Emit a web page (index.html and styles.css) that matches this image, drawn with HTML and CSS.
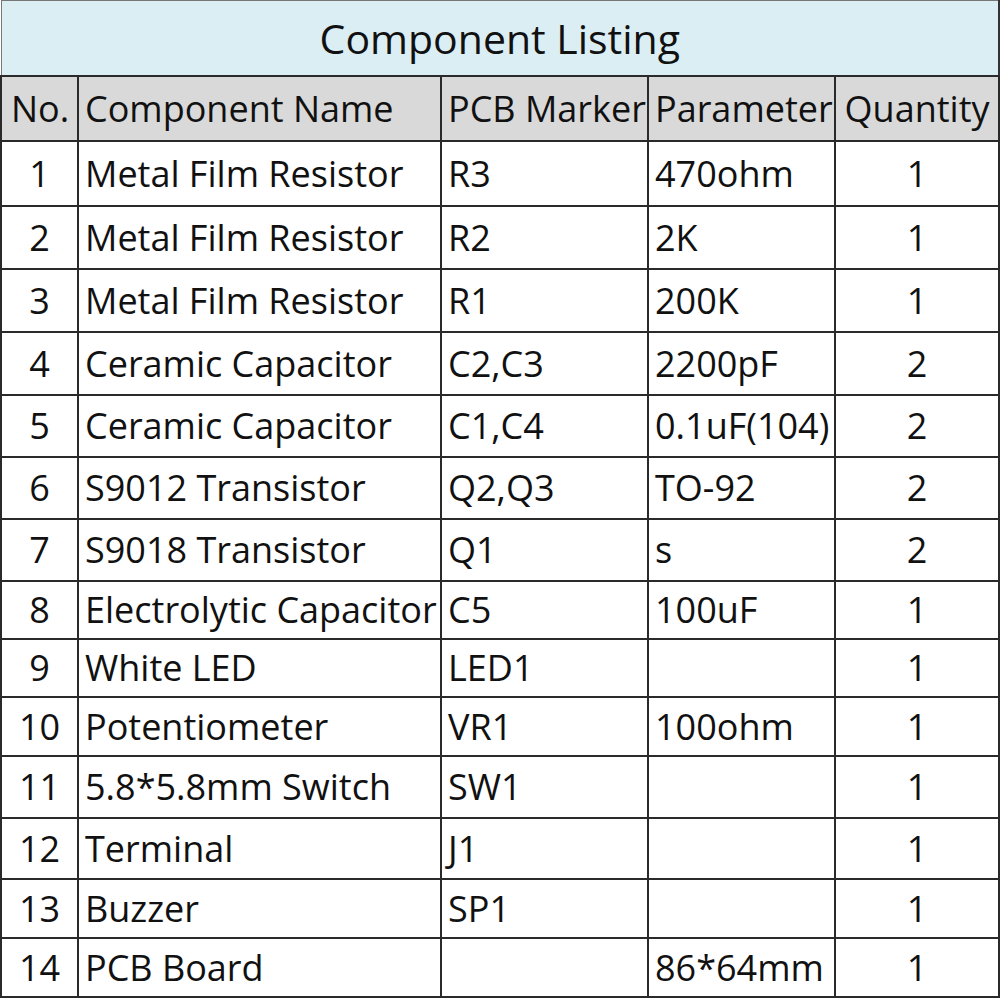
FILE: index.html
```html
<!DOCTYPE html>
<html>
<head>
<meta charset="utf-8">
<link rel="stylesheet" href="styles.css">
</head>
<body>
<table class="listing">
  <colgroup>
    <col class="c-no"><col class="c-name"><col class="c-mark"><col class="c-param"><col class="c-qty">
  </colgroup>
  <thead>
    <tr class="title-row"><th colspan="5">Component Listing</th></tr>
    <tr class="head-row">
      <th class="no">No.</th><th>Component Name</th><th>PCB Marker</th><th>Parameter</th><th class="qty">Quantity</th>
    </tr>
  </thead>
  <tbody>
    <tr><td class="no">1</td><td>Metal Film Resistor</td><td>R3</td><td>470ohm</td><td class="qty">1</td></tr>
    <tr><td class="no">2</td><td>Metal Film Resistor</td><td>R2</td><td>2K</td><td class="qty">1</td></tr>
    <tr><td class="no">3</td><td>Metal Film Resistor</td><td>R1</td><td>200K</td><td class="qty">1</td></tr>
    <tr><td class="no">4</td><td>Ceramic Capacitor</td><td>C2,C3</td><td>2200pF</td><td class="qty">2</td></tr>
    <tr><td class="no">5</td><td>Ceramic Capacitor</td><td>C1,C4</td><td>0.1uF(104)</td><td class="qty">2</td></tr>
    <tr><td class="no">6</td><td>S9012 Transistor</td><td>Q2,Q3</td><td>TO-92</td><td class="qty">2</td></tr>
    <tr><td class="no">7</td><td>S9018 Transistor</td><td>Q1</td><td>s</td><td class="qty">2</td></tr>
    <tr><td class="no">8</td><td>Electrolytic Capacitor</td><td>C5</td><td>100uF</td><td class="qty">1</td></tr>
    <tr><td class="no">9</td><td>White LED</td><td>LED1</td><td></td><td class="qty">1</td></tr>
    <tr><td class="no">10</td><td>Potentiometer</td><td>VR1</td><td>100ohm</td><td class="qty">1</td></tr>
    <tr><td class="no">11</td><td>5.8*5.8mm Switch</td><td>SW1</td><td></td><td class="qty">1</td></tr>
    <tr><td class="no">12</td><td>Terminal</td><td>J1</td><td></td><td class="qty">1</td></tr>
    <tr><td class="no">13</td><td>Buzzer</td><td>SP1</td><td></td><td class="qty">1</td></tr>
    <tr><td class="no">14</td><td>PCB Board</td><td></td><td>86*64mm</td><td class="qty">1</td></tr>
  </tbody>
</table>
</body>
</html>
```
FILE: styles.css
```css
html, body {
  margin: 0;
  padding: 0;
  background: #ffffff;
}

.listing {
  border-collapse: collapse;
  table-layout: fixed;
  width: 998px;
  font-family: "Open Sans", "Noto Sans", sans-serif;
  font-size: 36px;
  color: #111;
}

.c-no { width: 77px; }
.c-name { width: 363px; }
.c-mark { width: 207px; }
.c-param { width: 187px; }
.c-qty { width: 164px; }

.listing th,
.listing td {
  border: 2px solid #2a2a2a;
  padding: 0 0 0 6px;
  text-align: left;
  font-weight: normal;
  white-space: nowrap;
  overflow: hidden;
  line-height: 1;
}

.title-row th {
  height: 74px;
  background: #dbeef3;
  text-align: center;
  padding: 0;
  border-top: 1px solid #777;
  border-left: 1px solid #777;
  border-right: 2px solid #333;
  font-size: 41px;
}

.head-row th {
  height: 63px;
  background: #d9d9d9;
}

.listing .no,
.listing .qty {
  text-align: center;
  padding: 0;
}

.head-row th.no { padding-left: 1px; }

.listing td { height: 59px; }

.listing tbody tr:nth-child(1) td { height: 63px; }
.listing tbody tr:nth-child(2) td,
.listing tbody tr:nth-child(3) td,
.listing tbody tr:nth-child(4) td { height: 61px; }
.listing tbody tr:nth-child(5) td { height: 60px; }
.listing tbody tr:nth-child(6) td,
.listing tbody tr:nth-child(7) td,
.listing tbody tr:nth-child(11) td { height: 60px; }
.listing tbody tr:nth-child(8) td,
.listing tbody tr:nth-child(9) td { height: 56px; }
.listing tbody tr:nth-child(10) td { height: 57px; }
.listing tbody tr:nth-child(12) td { height: 59px; }
.listing tbody tr:nth-child(13) td,
.listing tbody tr:nth-child(14) td { height: 57px; }
```
